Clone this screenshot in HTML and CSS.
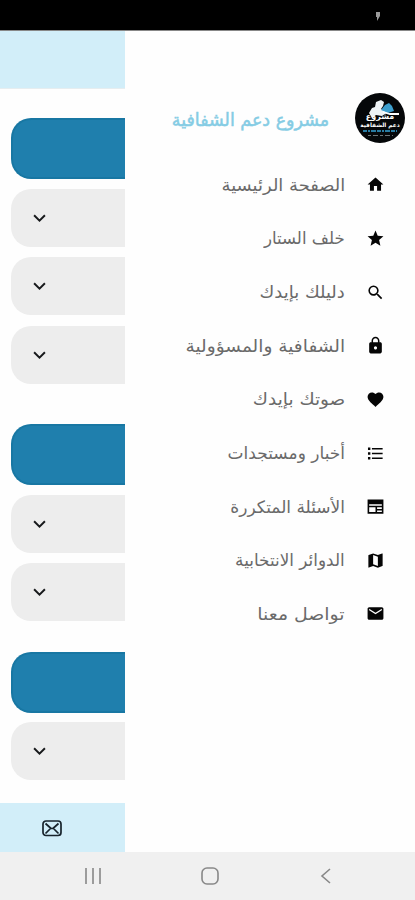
FILE: index.html
```html
<!DOCTYPE html>
<html lang="ar">
<head>
<meta charset="utf-8">
<title>مشروع دعم الشفافية</title>
<link rel="stylesheet" href="styles.css">
</head>
<body>
<header class="status"><svg width="6" height="10" viewBox="0 0 6 10"><path d="M1 0h4v4L2 9V5H1z" fill="#999"/></svg></header>
<main class="screen">
  <div class="page">
    <div class="topbar"></div>
    <div class="content">
      <section class="group">
        <div class="heading"></div>
        <div class="card"><svg class="chev" viewBox="0 0 12 8"><path d="M1 1l5 5 5-5"/></svg></div>
        <div class="card"><svg class="chev" viewBox="0 0 12 8"><path d="M1 1l5 5 5-5"/></svg></div>
        <div class="card"><svg class="chev" viewBox="0 0 12 8"><path d="M1 1l5 5 5-5"/></svg></div>
      </section>
      <section class="group">
        <div class="heading"></div>
        <div class="card"><svg class="chev" viewBox="0 0 12 8"><path d="M1 1l5 5 5-5"/></svg></div>
        <div class="card"><svg class="chev" viewBox="0 0 12 8"><path d="M1 1l5 5 5-5"/></svg></div>
      </section>
      <section class="group last">
        <div class="heading"></div>
        <div class="card"><svg class="chev" viewBox="0 0 12 8"><path d="M1 1l5 5 5-5"/></svg></div>
      </section>
    </div>
    <div class="bottombar"><svg width="20" height="17" viewBox="0 0 20 17" fill="none" stroke="#17232c" stroke-width="1.700"><rect x="1" y="1" width="18" height="14.500" rx="3"/><path d="M3.500 3.500l5 4.500q1.500 1 3 0l5-4.500M3.500 13.500l5-5M16.500 13.500l-5-5"/></svg></div>
  </div>
  <aside class="drawer" dir="rtl">
    <div class="brand">
      <svg class="logo" viewBox="0 0 50 50">
        <circle cx="25" cy="25" r="25" fill="#050709"/>
        <path d="M14 20l3-5 3-1 1-5 5-2 3 2-1 4-2 3 7 3-6 4-6-1-4 3z" fill="#eef3f5"/>
        <path d="M26 17l4-5 4-2 3 3 2 5-6 2z" fill="#3d9fce"/>
        <path d="M28 19l7 2h9" fill="none" stroke="#fff" stroke-width="1.800"/>
        <text x="25" y="25.500" class="logo-a">مشروع</text>
        <text x="25" y="34" class="logo-b">دعم الشفافية</text>
        <path d="M8 38h34" stroke="#287ba2" stroke-width="2" stroke-dasharray="4 1 2 1 5 1"/>
        <path d="M13 42.500h25" stroke="#6b7478" stroke-width="1" stroke-dasharray="3 2 5 2"/>
      </svg>
      <h1 class="title"><span>مشروع دعم الشفافية</span></h1>
    </div>
    <nav class="menu">
      <a class="item"><svg viewBox="0 0 24 24"><path d="M10 20v-6h4v6h5v-8h3L12 3 2 12h3v8z"/></svg><span class="t1">الصفحة الرئيسية</span></a>
      <a class="item"><svg viewBox="0 0 24 24"><path d="M12 17.270L18.180 21l-1.640-7.030L22 9.240l-7.190-.61L12 2 9.190 8.630 2 9.240l5.460 4.730L5.820 21z"/></svg><span class="t2">خلف الستار</span></a>
      <a class="item"><svg viewBox="0 0 24 24"><path d="M15.500 14h-.79l-.28-.27A6.471 6.471 0 0 0 16 9.500 6.500 6.500 0 1 0 9.500 16c1.610 0 3.090-.59 4.230-1.570l.27.28v.79l5 4.990L20.490 19l-4.990-5zm-6 0C7.010 14 5 11.990 5 9.500S7.010 5 9.500 5 14 7.010 14 9.500 11.990 14 9.500 14z"/></svg><span class="t3">دليلك بإيدك</span></a>
      <a class="item"><svg viewBox="0 0 24 24"><path d="M18 8h-1V6c0-2.760-2.240-5-5-5S7 3.240 7 6v2H6c-1.100 0-2 .9-2 2v10c0 1.100.9 2 2 2h12c1.100 0 2-.9 2-2V10c0-1.100-.9-2-2-2zm-6 9c-1.100 0-2-.9-2-2s.9-2 2-2 2 .9 2 2-.9 2-2 2zm3.100-9H8.900V6c0-1.710 1.390-3.100 3.100-3.100s3.100 1.390 3.100 3.100v2z"/></svg><span class="t4">الشفافية والمسؤولية</span></a>
      <a class="item"><svg viewBox="0 0 24 24"><path d="M12 21.350l-1.450-1.320C5.400 15.360 2 12.280 2 8.500 2 5.420 4.420 3 7.500 3c1.740 0 3.410.81 4.500 2.090C13.090 3.810 14.760 3 16.500 3 19.580 3 22 5.420 22 8.500c0 3.780-3.400 6.860-8.550 11.540z"/></svg><span class="t5">صوتك بإيدك</span></a>
      <a class="item"><svg viewBox="0 0 24 24"><path d="M2.500 4.500h3v3h-3zM2.500 10.500h3v3h-3zM2.500 16.500h3v3h-3zM7.500 5H21v2H7.500zM7.500 11H21v2H7.500zM7.500 17H21v2H7.500z"/></svg><span class="t6">أخبار ومستجدات</span></a>
      <a class="item"><svg viewBox="0 0 24 24"><path fill-rule="evenodd" d="M2 3h20v18H2zM4 9v2h16V9zM4 13v6h8v-6zM14 13v2h6v-2zM14 17v2h6v-2z"/></svg><span class="t7">الأسئلة المتكررة</span></a>
      <a class="item"><svg viewBox="0 0 24 24"><path d="M20.500 3l-.16.03L15 5.100 9 3 3.360 4.900c-.21.07-.36.25-.36.48V20.500c0 .28.22.5.5.5l.16-.03L9 18.900l6 2.100 5.640-1.900c.21-.07.36-.25.36-.48V3.500c0-.28-.22-.5-.5-.5zM15 19l-6-2.110V5l6 2.110V19z"/></svg><span class="t8">الدوائر الانتخابية</span></a>
      <a class="item"><svg viewBox="0 0 24 24"><path d="M20 4H4c-1.100 0-2 .9-2 2v12c0 1.100.9 2 2 2h16c1.100 0 2-.9 2-2V6c0-1.100-.9-2-2-2zm0 4l-8 5-8-5V6l8 5 8-5v2z"/></svg><span class="t9">تواصل معنا</span></a>
    </nav>
  </aside>
</main>
<footer class="sysnav">
  <svg width="18" height="18" viewBox="0 0 18 18"><path d="M2 1v16M9 1v16M16 1v16"/></svg>
  <svg width="18" height="18" viewBox="0 0 18 18"><rect x="1" y="1" width="16" height="16" rx="5"/></svg>
  <svg width="18" height="18" viewBox="0 0 18 18"><path d="M13 2L5 9l8 7"/></svg>
</footer>
</body>
</html>
```
FILE: styles.css
```css
* { box-sizing: border-box; }
body { margin: 0; width: 415px; height: 900px; display: flex; flex-direction: column; background: #fefefe; overflow: hidden; font-family: "DejaVu Sans", sans-serif; }
svg { display: block; flex: none; }
.status { height: 31px; background: #000; border-bottom: 1px solid #888; padding: 12px 34px 0 0; display: flex; justify-content: flex-end; }
.screen { height: 821px; display: flex; }
.page { width: 125px; display: flex; flex-direction: column; }
.topbar { height: 58px; background: #d2eef9; border-bottom: 1px solid #e6edf0; }
.content { flex: 1; padding: 29px 0 0 11px; display: flex; flex-direction: column; gap: 40.500px; }
.group { display: flex; flex-direction: column; gap: 10.500px; }
.group.last { margin-top: -10px; }
.heading { height: 61px; margin-bottom: -1px; background: #1f7fad; border: 2px solid #1877a3; border-right: 0; border-radius: 20px 0 0 20px; }
.card { height: 58px; background: #ededed; border-radius: 20px 0 0 20px; padding-left: 22px; display: flex; align-items: center; }
.chev { width: 13px; height: 9px; margin-top: 1px; fill: none; stroke: #17191b; stroke-width: 1.800; }
.bottombar { height: 49px; background: #d2eef9; padding: 1px 0 0 42px; display: flex; align-items: center; }
.drawer { width: 290px; padding: 62px 10px 0 0; }
.brand { display: flex; gap: 26px; height: 50px; align-items: center; }
.logo { width: 50px; height: 50px; }
.logo-a, .logo-b { text-anchor: middle; fill: #fff; font-weight: bold; direction: rtl; }
.logo-a { font-size: 8px; }
.logo-b { font-size: 5.800px; }
.title { margin: 3px 0 0; font-size: 18px; font-weight: normal; color: #85cce4; line-height: 30px; -webkit-text-stroke: .5px #85cce4; }
.title span, .item span { display: block; white-space: nowrap; transform-origin: right center; }
.title span { transform: scaleX(.97); }
.menu { padding: 15px 20px 0 0; }
.item { height: 53.650px; display: flex; align-items: center; gap: 21px; color: #6a6a6a; font-size: 17px; line-height: 24px; }
.item svg { width: 19px; height: 19px; fill: #050505; }
.t1 { transform: scaleX(1.055); }
.t2 { transform: scaleX(.976); }
.t3 { transform: scaleX(1.055); }
.t4 { transform: scaleX(1.092); }
.t5 { transform: scaleX(1.085); }
.t8 { transform: scaleX(.99); }
.t9 { transform: scaleX(1.11); }
.sysnav { height: 48px; background: #f0f0f0; padding: 0 80px 0 84px; display: flex; justify-content: space-between; align-items: center; }
.sysnav svg { fill: none; stroke: #888; stroke-width: 1.600; }
```
